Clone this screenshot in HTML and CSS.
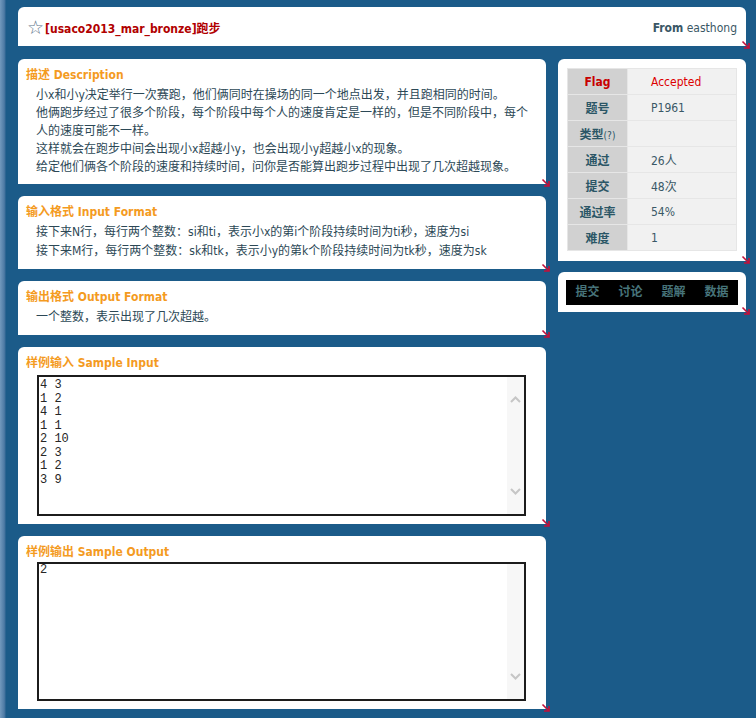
FILE: index.html
```html
<!DOCTYPE html>
<html lang="zh-CN">
<head>
<meta charset="utf-8">
<title>[usaco2013_mar_bronze]跑步</title>
<link rel="stylesheet" href="styles.css">
</head>
<body>
<div class="page">
  <header class="card titlebar">
    <h1 class="ptitle"><span class="star">☆</span><span class="pname">[usaco2013_mar_bronze]跑步</span></h1>
    <div class="from"><b>From</b> easthong</div>
    <i class="corner"><svg viewBox="0 0 10 10" width="10" height="10"><path d="M1.5 1.5 L8 8 M8 3 V8 H3" fill="none" stroke="#c4103a" stroke-width="1.6"/></svg></i>
  </header>

  <div class="main">
    <div class="leftcol">
      <section class="card sec">
        <h2 class="sec-title">描述 Description</h2>
        <div class="sec-body desc">小x和小y决定举行一次赛跑，他们俩同时在操场的同一个地点出发，并且跑相同的时间。<br>他俩跑步经过了很多个阶段，每个阶段中每个人的速度肯定是一样的，但是不同阶段中，每个人的速度可能不一样。<br>这样就会在跑步中间会出现小x超越小y，也会出现小y超越小x的现象。<br>给定他们俩各个阶段的速度和持续时间，问你是否能算出跑步过程中出现了几次超越现象。</div>
        <i class="corner"><svg viewBox="0 0 10 10" width="10" height="10"><path d="M1.5 1.5 L8 8 M8 3 V8 H3" fill="none" stroke="#c4103a" stroke-width="1.6"/></svg></i>
      </section>

      <section class="card sec">
        <h2 class="sec-title">输入格式 Input Format</h2>
        <div class="sec-body fmt">接下来N行，每行两个整数：si和ti，表示小x的第i个阶段持续时间为ti秒，速度为si<br>接下来M行，每行两个整数：sk和tk，表示小y的第k个阶段持续时间为tk秒，速度为sk</div>
        <i class="corner"><svg viewBox="0 0 10 10" width="10" height="10"><path d="M1.5 1.5 L8 8 M8 3 V8 H3" fill="none" stroke="#c4103a" stroke-width="1.6"/></svg></i>
      </section>

      <section class="card sec">
        <h2 class="sec-title">输出格式 Output Format</h2>
        <div class="sec-body fmt">一个整数，表示出现了几次超越。</div>
        <i class="corner"><svg viewBox="0 0 10 10" width="10" height="10"><path d="M1.5 1.5 L8 8 M8 3 V8 H3" fill="none" stroke="#c4103a" stroke-width="1.6"/></svg></i>
      </section>

      <section class="card sec">
        <h2 class="sec-title">样例输入 Sample Input</h2>
        <div class="samplebox">
          <pre class="sample-text">4 3
1 2
4 1
1 1
2 10
2 3
1 2
3 9</pre>
          <div class="scroll">
            <svg class="chev" viewBox="0 0 11 7" width="11" height="7"><polyline points="1,6 5.5,1.5 10,6" fill="none" stroke="#c6c6c6" stroke-width="2"/></svg>
            <svg class="chev" viewBox="0 0 11 7" width="11" height="7"><polyline points="1,1 5.5,5.5 10,1" fill="none" stroke="#c6c6c6" stroke-width="2"/></svg>
          </div>
        </div>
        <i class="corner"><svg viewBox="0 0 10 10" width="10" height="10"><path d="M1.5 1.5 L8 8 M8 3 V8 H3" fill="none" stroke="#c4103a" stroke-width="1.6"/></svg></i>
      </section>

      <section class="card sec">
        <h2 class="sec-title">样例输出 Sample Output</h2>
        <div class="samplebox out">
          <pre class="sample-text">2</pre>
          <div class="scroll">
            <svg class="chev hidden" viewBox="0 0 11 7" width="11" height="7"><polyline points="1,6 5.5,1.5 10,6" fill="none" stroke="#c6c6c6" stroke-width="2"/></svg>
            <svg class="chev" viewBox="0 0 11 7" width="11" height="7"><polyline points="1,1 5.5,5.5 10,1" fill="none" stroke="#c6c6c6" stroke-width="2"/></svg>
          </div>
        </div>
        <i class="corner"><svg viewBox="0 0 10 10" width="10" height="10"><path d="M1.5 1.5 L8 8 M8 3 V8 H3" fill="none" stroke="#c4103a" stroke-width="1.6"/></svg></i>
      </section>
    </div>

    <aside class="rightcol">
      <div class="card infocard">
        <table class="info">
          <tr><th class="flag">Flag</th><td class="accepted">Accepted</td></tr>
          <tr><th>题号</th><td>P1961</td></tr>
          <tr><th>类型<small>(?)</small></th><td></td></tr>
          <tr><th>通过</th><td>26人</td></tr>
          <tr><th>提交</th><td>48次</td></tr>
          <tr><th>通过率</th><td>54%</td></tr>
          <tr><th>难度</th><td>1</td></tr>
        </table>
        <i class="corner"><svg viewBox="0 0 10 10" width="10" height="10"><path d="M1.5 1.5 L8 8 M8 3 V8 H3" fill="none" stroke="#c4103a" stroke-width="1.6"/></svg></i>
      </div>
      <div class="card navcard">
        <nav class="navbar">
          <a href="#">提交</a>
          <a href="#">讨论</a>
          <a href="#">题解</a>
          <a href="#">数据</a>
        </nav>
        <i class="corner"><svg viewBox="0 0 10 10" width="10" height="10"><path d="M1.5 1.5 L8 8 M8 3 V8 H3" fill="none" stroke="#c4103a" stroke-width="1.6"/></svg></i>
      </div>
    </aside>
  </div>
</div>
</body>
</html>
```

FILE: styles.css
```css
* { box-sizing: border-box; }

html, body { margin: 0; }

body {
  background-color: #1b5b89;
  background-image: linear-gradient(to right, #7299bd 0, #4f7ca6 4px, #3f6f9b 5px, #1b5b89 6px);
  min-height: 718px;
  font-family: "DejaVu Sans Condensed", "Noto Sans CJK SC", sans-serif;
  font-size: 12px;
  color: #2c4856;
}

.page {
  padding: 7px 10px 0 18px;
}

.card {
  position: relative;
  background: #fff;
  border-radius: 6px 6px 0 0;
}

.corner {
  position: absolute;
  right: -5px;
  bottom: -4px;
  width: 10px;
  height: 10px;
  display: block;
}
.corner svg { display: block; }

/* title bar */
.titlebar {
  height: 39px;
  display: flex;
  align-items: center;
  justify-content: space-between;
  padding: 2px 9px 0 9px;
}

.ptitle {
  margin: 0;
  font-size: 12px;
  font-weight: bold;
  display: flex;
  align-items: center;
}

.star {
  font-family: "DejaVu Sans", sans-serif;
  font-weight: normal;
  font-size: 19px;
  line-height: 1;
  color: #5c7489;
  margin-right: 1px;
}

.pname { color: #b10000; }

.from { color: #3a5765; }
.from b { font-weight: bold; }

/* layout */
.main {
  display: grid;
  grid-template-columns: 528px 188px;
  column-gap: 12px;
  margin-top: 13px;
  align-items: start;
}

.leftcol {
  display: flex;
  flex-direction: column;
  gap: 12px;
}

.rightcol {
  display: flex;
  flex-direction: column;
  gap: 11px;
}

/* sections */
.sec {
  padding: 7px 10px 8px 8px;
}

.sec-title {
  margin: 0;
  font-size: 12px;
  line-height: 18px;
  font-weight: bold;
  color: #f49b1f;
}

.sec-body {
  margin-left: 10px;
}

.sec-body.desc { line-height: 18px; margin-top: 2px; }
.sec-body.fmt { line-height: 19px; margin-top: 2px; }

/* sample boxes */
.samplebox {
  margin: 3px 0 0 11px;
  width: 489px;
  height: 141px;
  border: 2px solid #1c1c1c;
  display: flex;
}

.samplebox.out {
  margin-top: 1px;
  height: 139px;
}

.sample-text {
  flex: 1;
  margin: 0;
  padding: 2px 0 0 1px;
  font-family: "Liberation Mono", monospace;
  font-size: 12px;
  line-height: 13.55px;
  color: #262626;
}

.samplebox.out .sample-text { padding-top: 0; }

.scroll {
  width: 17px;
  background: #f7f7f7;
  display: flex;
  flex-direction: column;
  justify-content: space-between;
  align-items: center;
  padding: 19px 0 19px;
}

.chev { display: block; }
.chev.hidden { visibility: hidden; }

/* info table */
.infocard {
  padding: 9px 9px 10px 9px;
}

.info {
  width: 100%;
  border-collapse: collapse;
  border: 1px solid #e2e2e2;
}

.info th,
.info td {
  height: 26px;
  border: 1px solid #e6e6e6;
  padding: 0;
  font-size: 12px;
}

.info th {
  width: 60px;
  background: #d1d1d1;
  color: #2b5666;
  font-weight: bold;
  text-align: center;
}

.info th small {
  font-size: 10px;
  font-weight: normal;
}

.info td {
  background: #f1f1f1;
  color: #3a5866;
  padding-left: 23px;
  text-align: left;
}

.info th.flag { color: #c80000; }
.info td.accepted { color: #dd0000; }

/* nav */
.navcard {
  padding: 8px 8px 7px 8px;
}

.navbar {
  display: flex;
  height: 25px;
  background: #000;
}

.navbar a {
  flex: 1;
  text-align: center;
  line-height: 25px;
  color: #47747a;
  font-weight: bold;
  text-decoration: none;
}
```
